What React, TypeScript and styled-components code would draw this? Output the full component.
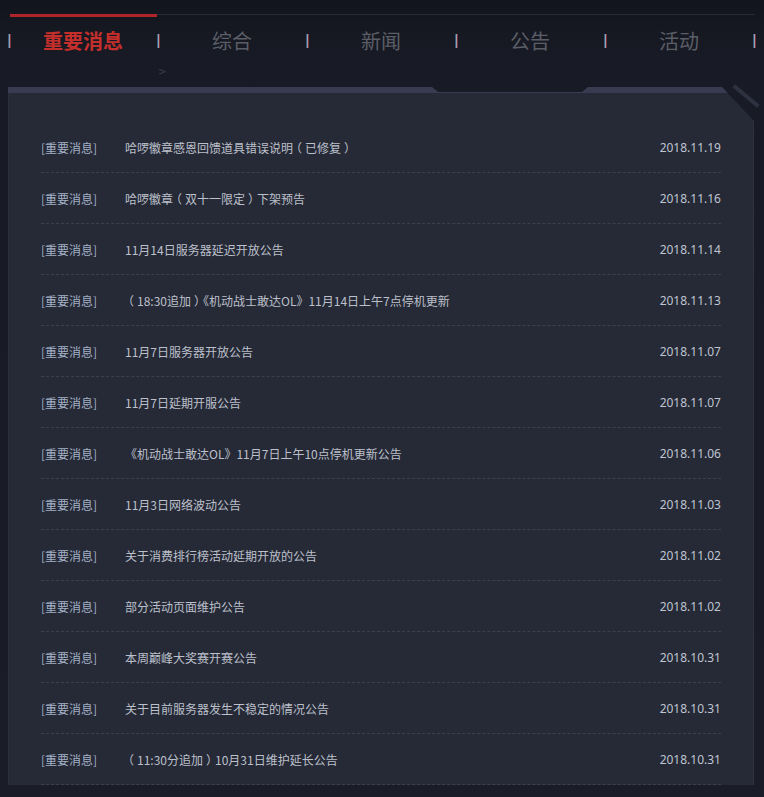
import React from "react";
import styled, { createGlobalStyle } from "styled-components";

const Global = createGlobalStyle`
  html, body { margin: 0; padding: 0; }
  body {
    background: #191c27;
    font-family: "Microsoft YaHei", "Noto Sans CJK SC", "Noto Sans", sans-serif;
    overflow: hidden;
  }
`;

const Page = styled.div`
  width: 764px;
  min-height: 797px;
  padding-top: 14px;
  box-sizing: border-box;
  background: linear-gradient(180deg, #13151e 0px, #181b25 60px, #1a1d28 100%);
  position: relative;
`;

const TopLine = styled.div`
  margin-left: 10px;
  width: 745px;
  height: 3px;
  display: flex;
  align-items: flex-start;
`;

const TopLineActive = styled.div`
  width: 147px;
  height: 3px;
  background: #b0252a;
`;

const TopLineRest = styled.div`
  flex: 1;
  height: 1px;
  background: #262a37;
`;

const TabRow = styled.div`
  display: flex;
  align-items: center;
  height: 48px;
  padding-left: 9px;
`;

const Sep = styled.span`
  width: 1px;
  height: 14px;
  background: #9aa0aa;
  box-shadow: -1px 0 0 #2f5d88, 1px 0 0 #7e2f36;
  flex: none;
`;

const Tab = styled.div<{ $active?: boolean }>`
  width: 148px;
  padding-right: 2px;
  box-sizing: border-box;
  text-align: center;
  font-size: 20px;
  line-height: 28px;
  font-weight: ${(p) => (p.$active ? 700 : 400)};
  color: ${(p) => (p.$active ? "#c42f2c" : "#5b5e67")};
`;

const Crumb = styled.div`
  height: 22px;
  padding-left: 158px;
  font-size: 10px;
  line-height: 14px;
  color: #3b3e49;
  font-family: "DejaVu Sans", sans-serif;
`;

const PanelWrap = styled.div`
  position: relative;
  margin-left: 8px;
  width: 746px;
`;

const Panel = styled.div`
  position: relative;
  background: #262936;
  box-shadow: inset 1px 0 0 #2b2e3c, inset -1px 0 0 #30333f;
  padding: 35px 33px 0 33px;
  clip-path: polygon(
    0 0,
    424px 0,
    430px 5px,
    574px 5px,
    580px 0,
    714px 0,
    746px 34px,
    746px 100%,
    0 100%
  );
  &::before {
    content: "";
    position: absolute;
    left: 0;
    top: 0;
    right: 0;
    height: 6px;
    background: #393c50;
  }
`;

const Stripe = styled.div`
  position: absolute;
  right: -8px;
  top: 7px;
  width: 32px;
  height: 4px;
  background: #2e3140;
  transform: rotate(40deg);
`;

const List = styled.ul`
  list-style: none;
  margin: 0;
  padding: 0;
`;

const Row = styled.li`
  display: flex;
  align-items: center;
  box-sizing: border-box;
  height: 51px;
  border-bottom: 1px dashed #3d404f;
  font-size: 12px;
  padding-top: 1px;
`;

const TagText = styled.span`
  width: 84px;
  flex: none;
  color: #a3b1c6;
`;

const Title = styled.span`
  flex: 1;
  color: #bcc0cb;
  white-space: nowrap;
`;

const Paren = styled.span`
  font-feature-settings: "halt" 1;
  padding: 0 3px;
`;

const DateText = styled.span`
  color: #bfc5d1;
  font-family: "Microsoft YaHei", "Noto Sans", "Noto Sans CJK SC", sans-serif;
`;

const tabs = ["重要消息", "综合", "新闻", "公告", "活动"];

const items: [string, string][] = [
  ["哈啰徽章感恩回馈道具错误说明（已修复）", "2018.11.19"],
  ["哈啰徽章（双十一限定）下架预告", "2018.11.16"],
  ["11月14日服务器延迟开放公告", "2018.11.14"],
  ["（18:30追加）《机动战士敢达OL》11月14日上午7点停机更新", "2018.11.13"],
  ["11月7日服务器开放公告", "2018.11.07"],
  ["11月7日延期开服公告", "2018.11.07"],
  ["《机动战士敢达OL》11月7日上午10点停机更新公告", "2018.11.06"],
  ["11月3日网络波动公告", "2018.11.03"],
  ["关于消费排行榜活动延期开放的公告", "2018.11.02"],
  ["部分活动页面维护公告", "2018.11.02"],
  ["本周巅峰大奖赛开赛公告", "2018.10.31"],
  ["关于目前服务器发生不稳定的情况公告", "2018.10.31"],
  ["（11:30分追加）10月31日维护延长公告", "2018.10.31"],
];

function renderTitle(title: string) {
  return title.split(/([（）])/).map((part, i) =>
    part === "（" || part === "）" ? (
      <Paren key={i}>{part}</Paren>
    ) : (
      <React.Fragment key={i}>{part}</React.Fragment>
    )
  );
}

export default function App() {
  return (
    <>
      <Global />
      <Page>
        <TopLine>
          <TopLineActive />
          <TopLineRest />
        </TopLine>
        <TabRow>
          <Sep />
          {tabs.map((t, i) => (
            <React.Fragment key={t}>
              <Tab $active={i === 0}>{t}</Tab>
              <Sep />
            </React.Fragment>
          ))}
        </TabRow>
        <Crumb>&gt;</Crumb>
        <PanelWrap>
          <Panel>
            <List>
              {items.map(([title, date], i) => (
                <Row key={i}>
                  <TagText>[重要消息]</TagText>
                  <Title>{renderTitle(title)}</Title>
                  <DateText>{date}</DateText>
                </Row>
              ))}
            </List>
          </Panel>
          <Stripe />
        </PanelWrap>
      </Page>
    </>
  );
}
